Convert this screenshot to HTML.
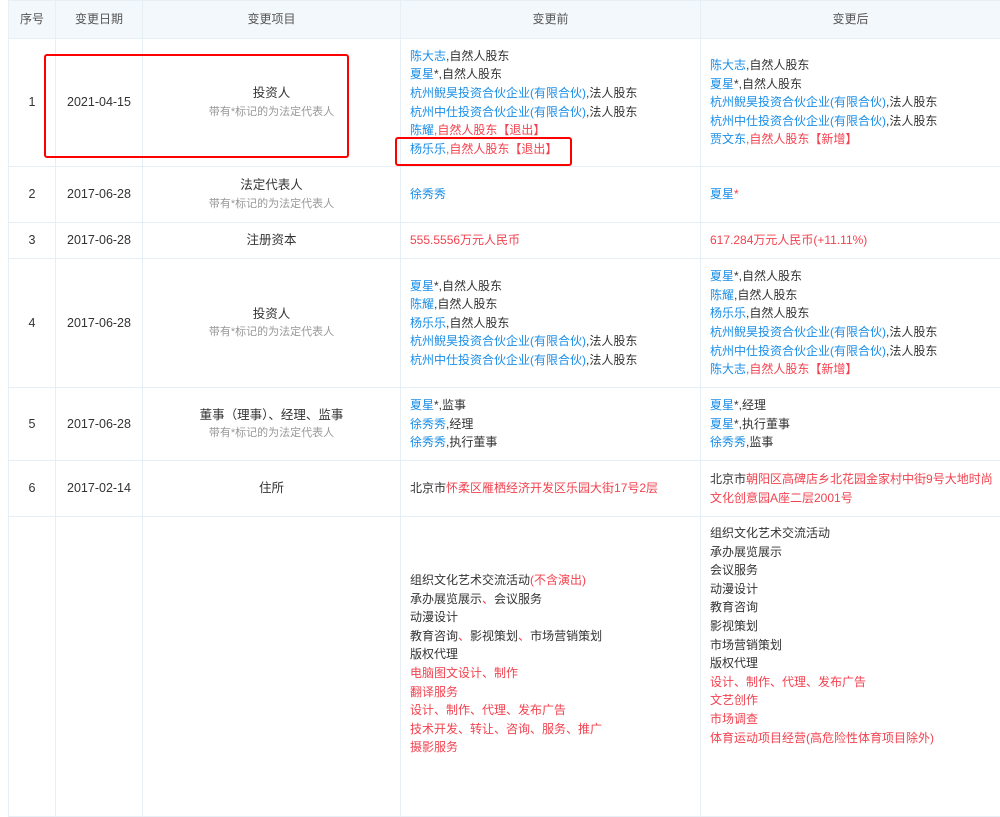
<!DOCTYPE html>
<html><head><meta charset="utf-8"><style>
*{margin:0;padding:0;box-sizing:border-box}
body{width:1000px;height:749px;overflow:hidden;background:#fff;font-family:"Liberation Sans","Noto Sans CJK SC",sans-serif;font-size:12px;color:#333;position:relative}
table{position:absolute;left:8px;top:0;border-collapse:collapse;table-layout:fixed;width:992px}
td,th{border:1px solid #e6eef6;vertical-align:middle;line-height:18.6px;font-weight:normal}
th{background:#f2f8fc;height:38px;color:#555;text-align:center}
td.c{text-align:center;font-size:12.5px}
td.l{padding-left:9px;text-align:left}
.b{color:#1a8ee8}.r{color:#f2424f}
.s{color:#999;font-size:11px;line-height:18px}
.box{position:absolute;border:2px solid #f00;border-radius:3px}
</style></head><body>
<table>
<colgroup><col style="width:47px"><col style="width:87px"><col style="width:258px"><col style="width:300px"><col style="width:300px"></colgroup>
<tr><th>序号</th><th>变更日期</th><th>变更项目</th><th>变更前</th><th>变更后</th></tr>
<tr style="height:128px"><td class="c">1</td><td class="c">2021-04-15</td><td class="c">投资人<div class="s">带有*标记的为法定代表人</div></td>
<td class="l"><span class="b">陈大志</span>,自然人股东<br><span class="b">夏星</span>*,自然人股东<br><span class="b">杭州鲵昊投资合伙企业(有限合伙)</span>,法人股东<br><span class="b">杭州中仕投资合伙企业(有限合伙)</span>,法人股东<br><span class="b">陈耀</span><span class="r">,自然人股东【退出】</span><br><span class="b">杨乐乐</span><span class="r">,自然人股东【退出】</span></td>
<td class="l"><span class="b">陈大志</span>,自然人股东<br><span class="b">夏星</span>*,自然人股东<br><span class="b">杭州鲵昊投资合伙企业(有限合伙)</span>,法人股东<br><span class="b">杭州中仕投资合伙企业(有限合伙)</span>,法人股东<br><span class="b">贾文东</span><span class="r">,自然人股东【新增】</span></td></tr>
<tr style="height:56px"><td class="c">2</td><td class="c">2017-06-28</td><td class="c">法定代表人<div class="s">带有*标记的为法定代表人</div></td><td class="l"><span class="b">徐秀秀</span></td><td class="l"><span class="b">夏星</span><span class="r">*</span></td></tr>
<tr style="height:36px"><td class="c">3</td><td class="c">2017-06-28</td><td class="c">注册资本</td><td class="l r">555.5556万元人民币</td><td class="l r">617.284万元人民币(+11.11%)</td></tr>
<tr style="height:129px"><td class="c">4</td><td class="c">2017-06-28</td><td class="c">投资人<div class="s">带有*标记的为法定代表人</div></td>
<td class="l"><span class="b">夏星</span>*,自然人股东<br><span class="b">陈耀</span>,自然人股东<br><span class="b">杨乐乐</span>,自然人股东<br><span class="b">杭州鲵昊投资合伙企业(有限合伙)</span>,法人股东<br><span class="b">杭州中仕投资合伙企业(有限合伙)</span>,法人股东</td>
<td class="l"><span class="b">夏星</span>*,自然人股东<br><span class="b">陈耀</span>,自然人股东<br><span class="b">杨乐乐</span>,自然人股东<br><span class="b">杭州鲵昊投资合伙企业(有限合伙)</span>,法人股东<br><span class="b">杭州中仕投资合伙企业(有限合伙)</span>,法人股东<br><span class="b">陈大志</span><span class="r">,自然人股东【新增】</span></td></tr>
<tr style="height:73px"><td class="c">5</td><td class="c">2017-06-28</td><td class="c">董事（理事）、经理、监事<div class="s">带有*标记的为法定代表人</div></td>
<td class="l"><span class="b">夏星</span>*,监事<br><span class="b">徐秀秀</span>,经理<br><span class="b">徐秀秀</span>,执行董事</td>
<td class="l"><span class="b">夏星</span>*,经理<br><span class="b">夏星</span>*,执行董事<br><span class="b">徐秀秀</span>,监事</td></tr>
<tr style="height:56px"><td class="c">6</td><td class="c">2017-02-14</td><td class="c">住所</td><td class="l">北京市<span class="r">怀柔区雁栖经济开发区乐园大街17号2层</span></td><td class="l">北京市<span class="r">朝阳区高碑店乡北花园金家村中街9号大地时尚文化创意园A座二层2001号</span></td></tr>
<tr style="height:300px"><td></td><td></td><td></td>
<td class="l" style="vertical-align:top;padding-top:54px">组织文化艺术交流活动<span class="r">(不含演出)</span><br>承办展览展示<span class="r">、</span>会议服务<br>动漫设计<br>教育咨询<span class="r">、</span>影视策划<span class="r">、</span>市场营销策划<br>版权代理<br><span class="r">电脑图文设计、制作<br>翻译服务<br>设计、制作、代理、发布广告<br>技术开发、转让、咨询、服务、推广<br>摄影服务</span></td>
<td class="l" style="vertical-align:top;padding-top:7px">组织文化艺术交流活动<br>承办展览展示<br>会议服务<br>动漫设计<br>教育咨询<br>影视策划<br>市场营销策划<br>版权代理<br><span class="r">设计、制作、代理、发布广告<br>文艺创作<br>市场调查<br>体育运动项目经营(高危险性体育项目除外)</span></td></tr>
</table>
<div class="box" style="left:44px;top:54px;width:305px;height:104px"></div>
<div class="box" style="left:395px;top:137px;width:177px;height:29px"></div>
</body></html>
